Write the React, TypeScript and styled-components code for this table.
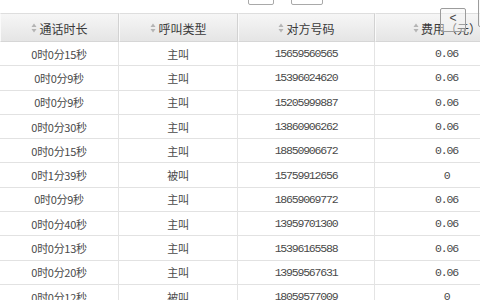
import React from "react";
import styled, { createGlobalStyle } from "styled-components";

const GlobalStyle = createGlobalStyle`
  html, body {
    margin: 0;
    padding: 0;
    background: #ffffff;
    overflow: hidden;
  }
  body {
    font-family: "Noto Sans CJK SC", "Liberation Sans", sans-serif;
  }
`;

const Page = styled.div`
  position: relative;
  width: 480px;
  height: 300px;
  overflow: hidden;
  background: #ffffff;
`;

const Pager = styled.div`
  height: 13px;
  display: flex;
  align-items: flex-end;
  padding-left: 248px;
  gap: 17px;
  overflow: hidden;
`;

const PageButton = styled.div<{ $w: number }>`
  width: ${(p) => p.$w}px;
  height: 20px;
  margin-bottom: 8px;
  box-sizing: border-box;
  border: 1px solid #a9a9a9;
  border-radius: 2px;
  background: #ffffff;
`;

const Grid = styled.div`
  display: grid;
  grid-template-columns: 119px 119px 137px 143px;
  width: 518px;
`;

const HeadCell = styled.div<{ $last?: boolean }>`
  height: 29px;
  box-sizing: border-box;
  display: flex;
  align-items: center;
  justify-content: center;
  gap: 2px;
  border-top: 1px solid #dedede;
  border-bottom: 1px solid #d6d6d6;
  border-right: ${(p) => (p.$last ? "none" : "1px solid #d2d2d2")};
  border-left: 1px solid #fafafa;
  background: linear-gradient(#f6f6f6, #e5e5e5);
  color: #3a3a3a;
  font-size: 12px;
  padding-top: 1px;
`;

const Cell = styled.div<{ $last?: boolean; $mono?: boolean }>`
  height: 24.3px;
  box-sizing: border-box;
  display: flex;
  align-items: center;
  justify-content: center;
  border-bottom: 1px solid #e2e2e2;
  border-right: ${(p) => (p.$last ? "none" : "1px solid #e4e4e4")};
  color: #4a4a4a;
  font-size: ${(p) => (p.$mono ? "11.5px" : "11px")};
  font-family: ${(p) =>
    p.$mono
      ? `"Liberation Mono", monospace`
      : `"Noto Sans CJK SC", "Liberation Sans", sans-serif`};
  letter-spacing: ${(p) => (p.$mono ? "-1.2px" : "-0.3px")};
  white-space: nowrap;
`;

const CollapseButton = styled.div`
  position: absolute;
  left: 440px;
  top: 8px;
  width: 26px;
  height: 24px;
  box-sizing: border-box;
  border: 1px solid #9c9c9c;
  border-radius: 2px;
  background: rgba(244, 244, 244, 0.45);
  color: #444;
  font-family: "Liberation Sans", sans-serif;
  font-size: 12px;
  line-height: 1;
  display: flex;
  justify-content: center;
  padding-top: 3px;
`;

const EdgeButton = styled.div`
  position: absolute;
  left: 478px;
  top: -4px;
  width: 20px;
  height: 31px;
  box-sizing: border-box;
  border: 1px solid #9c9c9c;
  border-radius: 2px;
  background: rgba(244, 244, 244, 0.45);
`;

const SortIcon = () => (
  <svg width="6" height="10" viewBox="0 0 6 10">
    <path d="M3 0.5 L5.5 4 L0.5 4 Z" fill="#b4b4b4" />
    <path d="M3 9.5 L5.5 6 L0.5 6 Z" fill="#b4b4b4" />
  </svg>
);

const headers = ["通话时长", "呼叫类型", "对方号码", "费用（元）"];

const rows: [string, string, string, string][] = [
  ["0时0分15秒", "主叫", "15659560565", "0.06"],
  ["0时0分9秒", "主叫", "15396024620", "0.06"],
  ["0时0分9秒", "主叫", "15205999887", "0.06"],
  ["0时0分30秒", "主叫", "13860906262", "0.06"],
  ["0时0分15秒", "主叫", "18850906672", "0.06"],
  ["0时1分39秒", "被叫", "15759912656", "0"],
  ["0时0分9秒", "主叫", "18659069772", "0.06"],
  ["0时0分40秒", "主叫", "13959701300", "0.06"],
  ["0时0分13秒", "主叫", "15396165588", "0.06"],
  ["0时0分20秒", "主叫", "13959567631", "0.06"],
  ["0时0分12秒", "被叫", "18059577009", "0"],
];

export default function App() {
  return (
    <>
      <GlobalStyle />
      <Page>
        <Pager>
          <PageButton $w={26} />
          <PageButton $w={32} />
        </Pager>
        <Grid>
          {headers.map((h, i) => (
            <HeadCell key={h} $last={i === headers.length - 1}>
              <SortIcon />
              {h}
            </HeadCell>
          ))}
          {rows.map((r, ri) =>
            r.map((v, ci) => (
              <Cell key={`${ri}-${ci}`} $last={ci === 3} $mono={ci >= 2}>
                {v}
              </Cell>
            ))
          )}
        </Grid>
        <CollapseButton>&lt;</CollapseButton>
        <EdgeButton />
      </Page>
    </>
  );
}
